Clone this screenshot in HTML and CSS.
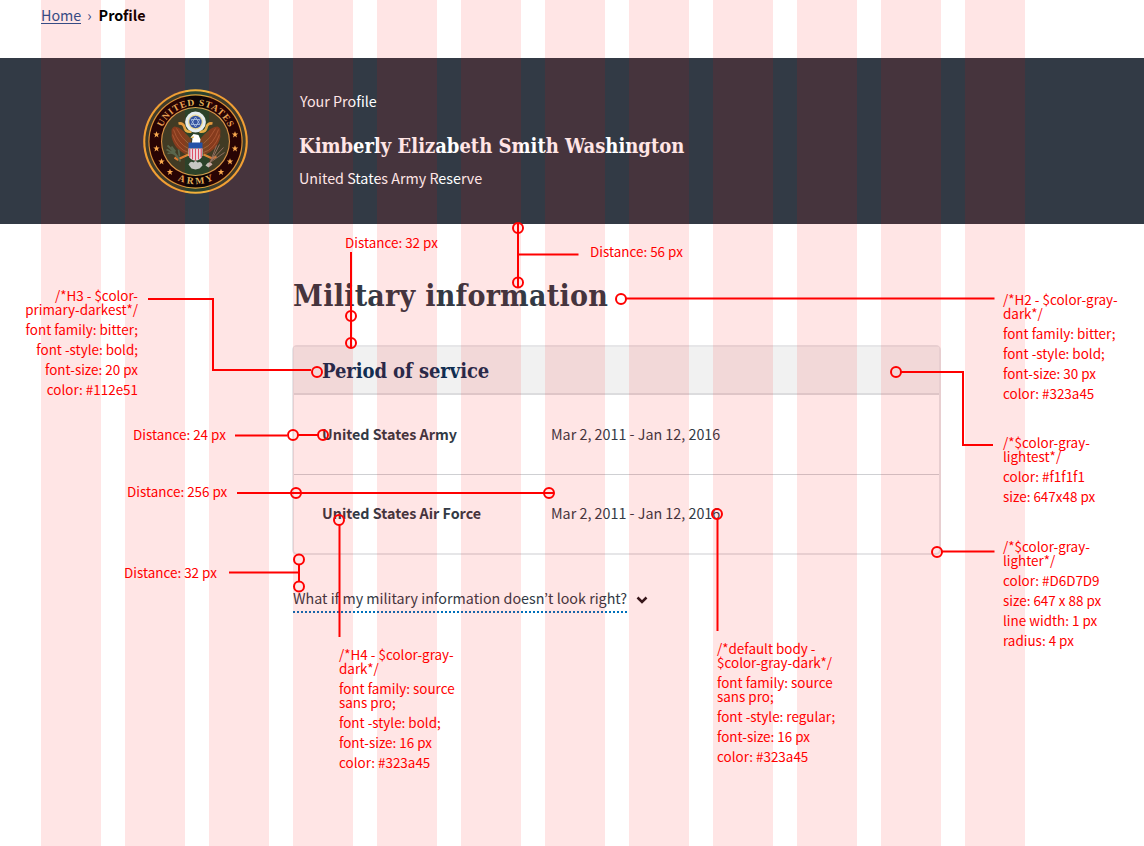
FILE: index.html
```html
<!DOCTYPE html>
<html lang="en">
<head>
<meta charset="utf-8">
<title>Profile</title>
<link rel="stylesheet" href="styles.css">
</head>
<body>
<div class="page">
  <nav class="crumbs"><a class="crumb-link" href="#">Home</a><span class="crumb-sep">›</span><b class="crumb-current">Profile</b></nav>
  <header class="banner">
    <svg class="seal" viewBox="-52.5 -52.5 105 105">
      <defs>
        <path id="arc-top" d="M-36 0A36 36 0 0 1 36 0"/>
        <path id="arc-bottom" d="M-42.5 0A42.5 42.5 0 0 0 42.5 0"/>
        <path id="star" d="M0-3.200L.9-1 3.200-.9 1.300.6 2 2.900 0 1.600-2 2.900-1.300.6-3.200-.9-.9-1z"/>
      </defs>
      <circle r="52.3" fill="#f0b13a"/><circle r="50.2" fill="#2a4330"/>
      <circle r="47.200" fill="#d9a23c"/><circle r="46" fill="#100505"/>
      <circle r="34.500" fill="#d9a750"/><circle r="33.400" fill="#2c4229"/>
      <text class="seal-text"><textPath href="#arc-top" startOffset="50%" text-anchor="middle" textLength="84">UNITED STATES</textPath></text>
      <text class="seal-text"><textPath href="#arc-bottom" startOffset="50%" text-anchor="middle" textLength="37">ARMY</textPath></text>
      <g fill="#f9bd58">
        <use href="#star" x="-39" y="-7"/><use href="#star" x="-39" y="7"/><use href="#star" x="-34" y="20"/><use href="#star" x="-25.500" y="30.500"/>
        <use href="#star" x="39.500" y="-7"/><use href="#star" x="39.500" y="7"/><use href="#star" x="34.500" y="20"/><use href="#star" x="25.500" y="30.500"/>
      </g>
      <path d="M-4-2C-10-8-14-14-21-15-26-13-23-8-24-5-22 4-17 10-7 14zM4-2C10-8 14-14 22-15 27-13 24-8 25-5 23 4 18 10 8 14z" fill="#794221"/>
      <path d="M-22-12Q-17 3-7 7M-23-7Q-18 8-7 11M-19-13Q-14-3-7 2M23-12Q18 3 8 7M24-7Q19 8 8 11M20-13Q15-3 8 2" fill="none" stroke="#a8683f" stroke-width=".8"/>
      <path d="M-17-18Q-12-19-11-14T-4-10M17-18Q12-19 11-14T4-10" fill="none" stroke="#e3ab45" stroke-width="2.600"/>
      <circle cy="-19.500" r="10.400" fill="#e5ecef"/><circle cy="-19.500" r="7.500" fill="#eadb9a"/><circle cy="-19.500" r="6.200" fill="#3554a0"/>
      <path d="M0-24.500L4.300-17H-4.300zM0-14.500L-4.300-22H4.300z" fill="none" stroke="#a6bddf" stroke-width=".9"/>
      <path d="M-5-4L-2-7.500 3-6.500 5-2 4 4H-4L-3-3z" fill="#fff"/><path d="M-5-3.500L-2-5.500-2-3.500z" fill="#e3aa37"/>
      <path d="M-7 13L-18 18-21 16M8 13L17 17 21 15" fill="none" stroke="#d98735" stroke-width="2.200"/>
      <path d="M-7 1H7V7H-7z" fill="#2452a7"/><path d="M-7 7H7V14Q5 19 0 19-5 19-7 14z" fill="#eceaf1"/>
      <path d="M-5.700 7v9M-3 7v11M0 7v12M3 7v11M5.700 7v9" stroke="#df5268" stroke-width="1.250"/>
      <path d="M-28 4Q-21 10-15 20M-28 12Q-22 10-18 16M-24 5l4 5M-17 8l1 7M-29 8l8 4" fill="none" stroke="#477255" stroke-width="1.700"/>
      <path d="M14 21L28 6M15 21L24 3M16 20L29 11M15 20L21 4" stroke="#8d8171" stroke-width=".9"/>
      <path d="M-7 23Q-5 19-2 21 0 18 2 21 6 19 7 24L4 27 0 28-4 27z" fill="#c6c6c3"/><path d="M10 24Q14 18 17 23L13 26z" fill="#c4bab3"/>
    </svg>
    <div class="identity">
      <p class="eyebrow">Your Profile</p>
      <h1 class="name">Kimberly Elizabeth Smith Washington</h1>
      <p class="branch">United States Army Reserve</p>
    </div>
  </header>
  <main class="content">
    <h2 class="title">Military information</h2>
    <section class="panel">
      <h3 class="panel-head"><span class="panel-title">Period of service</span></h3>
      <div class="row"><b class="service">United States Army</b><span class="dates">Mar 2, 2011 - Jan 12, 2016</span></div>
      <div class="row"><b class="service">United States Air Force</b><span class="dates">Mar 2, 2011 - Jan 12, 2016</span></div>
    </section>
    <div class="help"><span class="help-text">What if my military information doesn’t look right?</span><svg class="chevron" viewBox="0 0 12 8"><path d="M1.500 1.500L6 6l4.500-4.500" fill="none" stroke="#21191d" stroke-width="2.500"/></svg></div>
  </main>
  <div class="columns"><i></i><i></i><i></i><i></i><i></i><i></i><i></i><i></i><i></i><i></i><i></i><i></i></div>
  <svg class="callouts" viewBox="0 0 1144 846">
    <path d="M351 252V347M518 224V287M517 254.500H578.500M626 298.500H994.500M148 299H213V370H311M235 435.500H287M298 435H318M237 493H554M229 572.500H299M299 565V582M339.500 525V637M717.500 519V631M901 372H963V445H993M942 551.500H994.500"/>
    <circle cx="351" cy="316" r="5"/><circle cx="351" cy="343" r="5"/>
    <circle cx="518" cy="228" r="5"/><circle cx="518" cy="282.500" r="5"/>
    <circle cx="621" cy="299" r="5"/><circle cx="317" cy="372" r="5"/>
    <circle cx="293" cy="435" r="5"/><circle cx="323" cy="435" r="5"/>
    <circle cx="296" cy="493" r="5"/><circle cx="549" cy="493" r="5"/>
    <circle cx="299" cy="559.500" r="5"/><circle cx="299" cy="586.500" r="5"/>
    <circle cx="339" cy="520" r="5"/><circle cx="717" cy="514" r="5"/>
    <circle cx="896" cy="372" r="5"/><circle cx="937" cy="552" r="5"/>
  </svg>
  <div class="note n-title-gap">Distance: 32 px</div>
  <div class="note n-banner-gap">Distance: 56 px</div>
  <div class="note n-indent">Distance: 24 px</div>
  <div class="note n-column">Distance: 256 px</div>
  <div class="note n-panel-gap">Distance: 32 px</div>
  <div class="note n-h3"><p>/*H3 - $color-<br>primary-darkest*/</p><p>font family: bitter;</p><p>font -style: bold;</p><p>font-size: 20 px</p><p>color: #112e51</p></div>
  <div class="note n-h2"><p>/*H2 - $color-gray-<br>dark*/</p><p>font family: bitter;</p><p>font -style: bold;</p><p>font-size: 30 px</p><p>color: #323a45</p></div>
  <div class="note n-lightest"><p>/*$color-gray-<br>lightest*/</p><p>color: #f1f1f1</p><p>size: 647x48 px</p></div>
  <div class="note n-lighter"><p>/*$color-gray-<br>lighter*/</p><p>color: #D6D7D9</p><p>size: 647 x 88 px</p><p>line width: 1 px</p><p>radius: 4 px</p></div>
  <div class="note n-h4"><p>/*H4 - $color-gray-<br>dark*/</p><p>font family: source<br>sans pro;</p><p>font -style: bold;</p><p>font-size: 16 px</p><p>color: #323a45</p></div>
  <div class="note n-body"><p>/*default body -<br>$color-gray-dark*/</p><p>font family: source<br>sans pro;</p><p>font -style: regular;</p><p>font-size: 16 px</p><p>color: #323a45</p></div>
</div>
</body>
</html>
```

FILE: styles.css
```css
* { box-sizing: border-box; }
body { margin: 0; background: #fff; color: #323a45; font: 14.32px/20px "Noto Sans CJK KR", "Noto Sans", sans-serif; }
h1, h2, h3, p { margin: 0; }
.page { position: relative; width: 1144px; height: 846px; overflow: hidden; white-space: nowrap; }
.crumbs { display: flex; height: 58px; padding: 5px 0 0 41px; }
.crumb-link { height: 19px; line-height: 20px; color: #205493; text-decoration: none; border-bottom: 1px solid #205493; }
.crumb-sep { margin: 0 7px 0 6px; color: #205493; }
.crumb-current { color: #000; }
.banner { display: flex; height: 166px; padding: 30px 0 0 143px; background: #323a45; color: #fff; }
.seal { width: 105px; height: 105px; margin: .5px 51px 0 0; }
.seal-text { font: bold 9.5px "Liberation Serif", serif; fill: #e6b45c; }
.identity { padding-top: 3px; }
.eyebrow { padding-left: 1px; }
.name { margin: 23px 0 10px; font: bold 20px/24px "DejaVu Serif Condensed", "DejaVu Serif", serif; }
.content { width: 649px; margin-left: 292px; padding-top: 56px; }
.title { margin: 0 0 33px 1px; font: bold 30px/32px "DejaVu Serif Condensed", "DejaVu Serif", serif; letter-spacing: .25px; }
.panel { height: 210px; border: 2px solid #e6e6e8; border-radius: 5px; }
.panel-head { height: 48px; padding-left: 28px; background: #f1f1f1; border-bottom: 2px solid #dcdcde; color: #112e51; font: bold 20px/48px "DejaVu Serif Condensed", "DejaVu Serif", serif; letter-spacing: -.07px; }
.row { display: grid; grid-template-columns: 229px 1fr; align-items: center; height: 79px; padding: 0 0 1px 28px; }
.row + .row { padding-bottom: 3px; border-top: 1px solid #cfd0d3; }
.help { display: flex; align-items: center; height: 24px; margin: 33px 0 0 1px; font-size: 14.3px; }
.help-text { height: 26px; line-height: 22px; border-bottom: 2px dotted #0071bb; }
.chevron { width: 12px; height: 8px; margin-left: 9px; }
.columns { position: absolute; inset: 0; display: grid; grid-template-columns: repeat(12, 60px); gap: 24px; padding-left: 41px; }
.columns i { background: rgba(255, 0, 0, .1); }
.callouts { position: absolute; inset: 0; width: 1144px; height: 846px; fill: none; stroke: #f00; stroke-width: 2; }
.note { position: absolute; color: #f00; font-size: 13.44px; line-height: 14px; }
.note p + p { margin-top: 6px; }
.n-title-gap { left: 345px; top: 235px; }
.n-banner-gap { left: 590px; top: 244px; }
.n-indent { left: 133px; top: 427px; }
.n-column { left: 127px; top: 484px; }
.n-panel-gap { left: 124px; top: 565px; }
.n-h3 { right: 1006px; top: 288px; text-align: right; }
.n-h2 { left: 1003px; top: 292px; }
.n-lightest { left: 1003px; top: 435px; }
.n-lighter { left: 1003px; top: 539px; }
.n-h4 { left: 339px; top: 647px; }
.n-body { left: 717px; top: 641px; }
```
